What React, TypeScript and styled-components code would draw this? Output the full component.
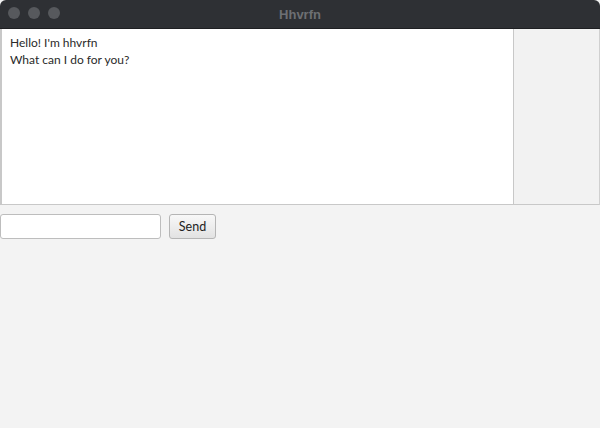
import React from "react";
import styled, { createGlobalStyle } from "styled-components";

const Global = createGlobalStyle`
  html, body { margin: 0; padding: 0; background: #f3f3f3; }
  body { font-family: "Lato", "Liberation Sans", sans-serif; }
`;

const Window = styled.div`
  width: 600px;
  height: 428px;
  background: #f3f3f3;
  display: flex;
  flex-direction: column;
  overflow: hidden;
  border-radius: 6px 6px 0 0;
`;

const TitleBar = styled.div`
  position: relative;
  height: 29px;
  flex: 0 0 29px;
  background: #2e3034;
  display: flex;
  align-items: center;
  justify-content: center;
  border-bottom: 1px solid #1e1f22;
  box-sizing: border-box;
`;

const Lights = styled.div`
  position: absolute;
  left: 8px;
  top: 7px;
  display: flex;
  gap: 8px;
`;

const Light = styled.span`
  width: 12px;
  height: 12px;
  border-radius: 50%;
  background: #57595d;
`;

const Title = styled.div`
  font-family: "Liberation Sans", "Noto Sans", sans-serif;
  font-weight: 700;
  font-size: 13px;
  color: #6d6f73;
`;

const Top = styled.div`
  display: flex;
  height: 176px;
  flex: 0 0 176px;
`;

const ChatArea = styled.div`
  width: 514px;
  box-sizing: border-box;
  background: #ffffff;
  border: 1px solid #c8c8c8;
  border-left: 2px solid #c8c8c8;
  border-top: none;
  padding: 5px 8px;
  font-family: "Lato", "Liberation Sans", sans-serif;
  font-size: 12px;
  line-height: 17px;
  color: #2a2a2a;
`;

const SidePanel = styled.div`
  flex: 1;
  background: #f2f2f2;
  border-bottom: 1px solid #c8c8c8;
  border-right: 1px solid #d0d0d0;
`;

const InputRow = styled.div`
  display: flex;
  align-items: center;
  gap: 8px;
  margin-top: 9px;
`;

const TextInput = styled.input`
  width: 161px;
  height: 25px;
  box-sizing: border-box;
  border: 1px solid #bdbdbd;
  border-radius: 3px;
  background: #fff;
  outline: none;
  font-family: "Lato", "Liberation Sans", sans-serif;
  font-size: 12px;
`;

const SendButton = styled.button`
  height: 25px;
  width: 47px;
  box-sizing: border-box;
  border: 1px solid #b5b5b5;
  border-radius: 3px;
  background: linear-gradient(#f8f8f8, #e2e2e2);
  font-family: "Lato", "Liberation Sans", sans-serif;
  font-size: 12.5px;
  color: #222;
  padding: 0;
`;

export default function App() {
  return (
    <Window>
      <Global />
      <TitleBar>
        <Lights>
          <Light />
          <Light />
          <Light />
        </Lights>
        <Title>Hhvrfn</Title>
      </TitleBar>
      <Top>
        <ChatArea>
          Hello! I'm hhvrfn
          <br />
          What can I do for you?
        </ChatArea>
        <SidePanel />
      </Top>
      <InputRow>
        <TextInput />
        <SendButton>Send</SendButton>
      </InputRow>
    </Window>
  );
}
